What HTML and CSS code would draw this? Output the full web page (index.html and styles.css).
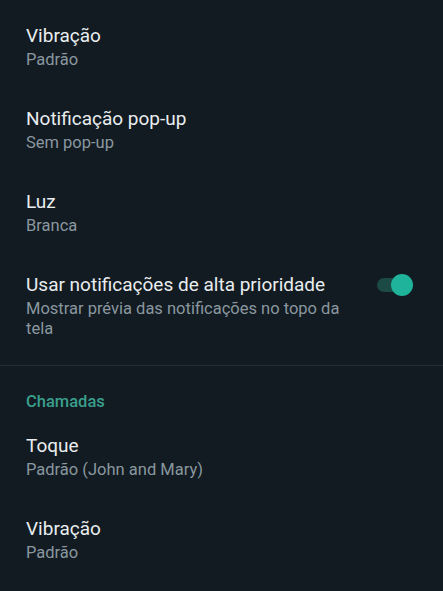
FILE: index.html
```html
<!DOCTYPE html>
<html lang="pt">
<head>
<meta charset="utf-8">
<link rel="stylesheet" href="styles.css">
</head>
<body>
<div class="screen">
  <section class="section first">
    <div class="row"><div class="text"><div class="title">Vibração</div><div class="sub">Padrão</div></div></div>
    <div class="row"><div class="text"><div class="title">Notificação pop-up</div><div class="sub">Sem pop-up</div></div></div>
    <div class="row"><div class="text"><div class="title">Luz</div><div class="sub">Branca</div></div></div>
    <div class="row">
      <div class="text narrow"><div class="title">Usar notificações de alta prioridade</div><div class="sub">Mostrar prévia das notificações no topo da tela</div></div>
      <div class="switch"><span class="track"></span><span class="thumb"></span></div>
    </div>
  </section>
  <div class="divider"></div>
  <section class="section">
    <div class="header">Chamadas</div>
    <div class="row"><div class="text"><div class="title">Toque</div><div class="sub">Padrão (John and Mary)</div></div></div>
    <div class="row"><div class="text"><div class="title">Vibração</div><div class="sub">Padrão</div></div></div>
  </section>
</div>
</body>
</html>
```
FILE: styles.css
```css
html, body {
  margin: 0;
  padding: 0;
  background: #121b22;
}
body {
  font-family: Roboto, "Noto Sans", sans-serif;
  width: 443px;
  height: 591px;
  overflow: hidden;
}
.screen {
  display: flex;
  flex-direction: column;
  padding-top: 6px;
  height: 585px;
}
.section.first {
  padding-bottom: 7px;
}
.row {
  display: flex;
  align-items: flex-start;
  padding: 18px 26px 19px 26px;
}
.text {
  display: flex;
  flex-direction: column;
  flex: 1;
}
.text.narrow {
  max-width: 334px;
}
.title {
  font-size: 19px;
  line-height: 24px;
  color: #e9edef;
  margin-bottom: 2px;
}
.sub {
  font-size: 16.5px;
  line-height: 20px;
  color: #8a979f;
}
.divider {
  height: 1px;
  background: #222d34;
}
.header {
  padding: 26px 26px 4px 26px;
  font-size: 16.5px;
  line-height: 20px;
  font-weight: 500;
  color: #3a9f8c;
}
.switch {
  position: relative;
  width: 40px;
  height: 24px;
  margin-left: auto;
  margin-right: 4px;
}
.track {
  position: absolute;
  left: 4px;
  top: 5px;
  width: 32px;
  height: 14px;
  border-radius: 7px;
  background: #1c4a44;
}
.thumb {
  position: absolute;
  left: 18px;
  top: 1px;
  width: 22px;
  height: 22px;
  border-radius: 50%;
  background: #1fb39c;
}
```
